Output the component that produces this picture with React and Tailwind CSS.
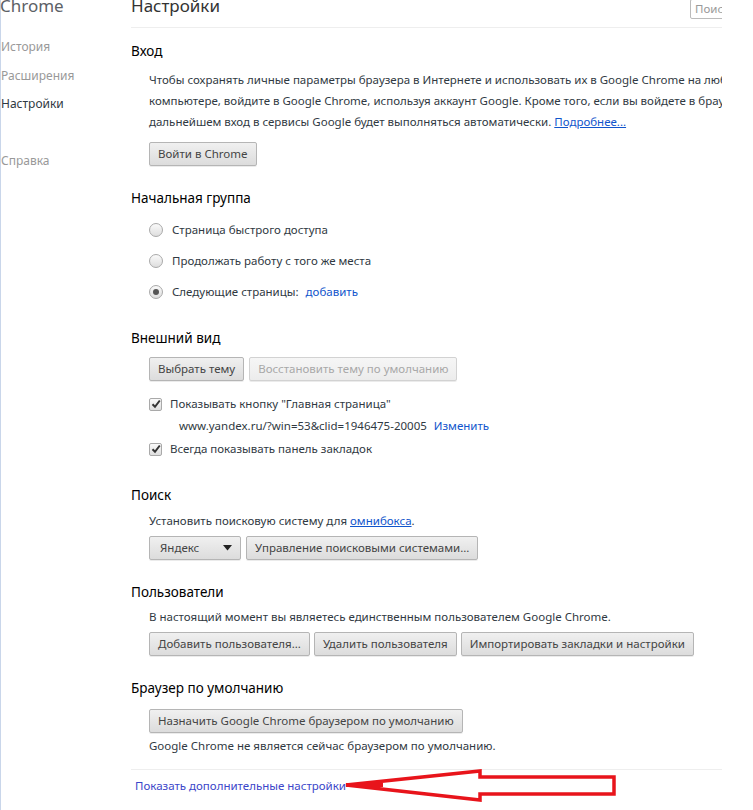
import React from "react";

const FONT = { fontFamily: '"Noto Sans", "Open Sans", sans-serif' };

function Btn({ children, disabled, className = "" }) {
  return (
    <button
      type="button"
      className={`h-[24px] px-[8px] rounded-[2px] border border-[#b5b5b5] bg-gradient-to-b from-[#f0f0f0] to-[#dcdcdc] shadow-[0_1px_0_rgba(0,0,0,0.08)] text-[11.5px] leading-[22px] whitespace-nowrap ${disabled ? "text-[#a8a8a8] border-[#d2d2d2] from-[#f6f6f6] to-[#ececec]" : "text-[#444]"} ${className}`}
    >
      {children}
    </button>
  );
}

function Radio({ checked, children }) {
  return (
    <div className="flex items-center h-[20px]">
      <span className="w-[14px] h-[14px] rounded-full border border-[#a9a9a9] bg-gradient-to-b from-[#fafafa] to-[#dedede] flex items-center justify-center shrink-0">
        {checked && <span className="w-[6px] h-[6px] rounded-full bg-[#555]" />}
      </span>
      <span className="ml-[9px] text-[11.5px] text-[#303942]">{children}</span>
    </div>
  );
}

function Check({ children }) {
  return (
    <div className="flex items-center h-[20px]">
      <span className="w-[13px] h-[13px] rounded-[2px] border border-[#a9a9a9] bg-gradient-to-b from-[#fafafa] to-[#dedede] flex items-center justify-center shrink-0">
        <svg width="10" height="10" viewBox="0 0 10 10">
          <path d="M1.5 5.2 L4 7.8 L8.8 1.5" fill="none" stroke="#333" strokeWidth="2" />
        </svg>
      </span>
      <span className="ml-[8px] text-[11.5px] text-[#303942]">{children}</span>
    </div>
  );
}

function H3({ children, className = "" }) {
  return <h3 className={`text-[13.5px] leading-[20px] text-black ${className}`}>{children}</h3>;
}

export default function App() {
  return (
    <div className="w-[753px] h-[810px] bg-white overflow-hidden flex" style={FONT}>
      {/* sidebar */}
      <div className="w-[131px] shrink-0 border-l border-[#c9d6ea]">
        <div className="text-[17px] leading-[24px] text-[#5c6166] mt-[-6px] ml-[-1px]">Chrome</div>
        <div className="mt-[19px] text-[12px] leading-[20px] text-[#999]">История</div>
        <div className="mt-[9px] text-[12px] leading-[20px] text-[#999]">Расширения</div>
        <div className="mt-[8px] text-[12px] leading-[20px] text-[#303942]">Настройки</div>
        <div className="mt-[37px] text-[12px] leading-[20px] text-[#999]">Справка</div>
      </div>

      {/* main */}
      <div className="w-[591px] shrink-0 overflow-hidden relative">
        <div className="h-[28px] border-b border-[#eee] flex justify-between">
          <h1 className="text-[17px] leading-[24px] text-[#333] mt-[-6px]">Настройки</h1>
          <div className="w-[100px] h-[20px] mr-[-68px] border border-[#bbb] rounded-[2px] text-[11.5px] leading-[18px] text-[#999] pl-[4px] mt-[-1px]">
            Поиск
          </div>
        </div>

        {/* Вход */}
        <H3 className="mt-[13px]">Вход</H3>
        <p className="pl-[18px] mt-[8px] text-[11.5px] leading-[21px] text-[#303942] whitespace-nowrap">
          Чтобы сохранять личные параметры браузера в Интернете и использовать их в Google Chrome на любом
          <br />
          компьютере, войдите в Google Chrome, используя аккаунт Google. Кроме того, если вы войдете в браузер,
          <br />
          дальнейшем вход в сервисы Google будет выполняться автоматически.{" "}
          <a className="text-[#15c] underline">Подробнее...</a>
        </p>
        <div className="pl-[18px] mt-[8px]">
          <Btn>Войти в Chrome</Btn>
        </div>

        {/* Начальная группа */}
        <H3 className="mt-[22px]">Начальная группа</H3>
        <div className="pl-[18px] mt-[12px] flex flex-col gap-[11px]">
          <Radio>Страница быстрого доступа</Radio>
          <Radio>Продолжать работу с того же места</Radio>
          <Radio checked>
            Следующие страницы: <a className="ml-[4px] text-[#15c]">добавить</a>
          </Radio>
        </div>

        {/* Внешний вид */}
        <H3 className="mt-[26px]">Внешний вид</H3>
        <div className="pl-[18px] mt-[9px] flex gap-[5px]">
          <Btn>Выбрать тему</Btn>
          <Btn disabled>Восстановить тему по умолчанию</Btn>
        </div>
        <div className="pl-[18px] mt-[13px]">
          <Check>Показывать кнопку "Главная страница"</Check>
          <div className="pl-[30px] mt-[2px] h-[20px] text-[11.5px] leading-[20px] text-[#303942]">
            www.yandex.ru/?win=53&clid=1946475-20005 <a className="ml-[4px] text-[#15c]">Изменить</a>
          </div>
          <div className="mt-[3px]">
            <Check>Всегда показывать панель закладок</Check>
          </div>
        </div>

        {/* Поиск */}
        <H3 className="mt-[26px]">Поиск</H3>
        <div className="pl-[18px] mt-[6px] text-[11.5px] leading-[20px] text-[#303942]">
          Установить поисковую систему для <a className="text-[#15c] underline">омнибокса</a>.
        </div>
        <div className="pl-[18px] mt-[5px] flex gap-[5px]">
          <Btn className="w-[92px] flex items-center justify-between !pl-[10px] !pr-[8px]">
            <span>Яндекс</span>
            <svg width="9" height="6" viewBox="0 0 9 6">
              <path d="M0 0 H9 L4.5 5.5 Z" fill="#222" />
            </svg>
          </Btn>
          <Btn>Управление поисковыми системами...</Btn>
        </div>

        {/* Пользователи */}
        <H3 className="mt-[22px]">Пользователи</H3>
        <div className="pl-[18px] mt-[5px] text-[11.5px] leading-[20px] text-[#303942]">
          В настоящий момент вы являетесь единственным пользователем Google Chrome.
        </div>
        <div className="pl-[18px] mt-[5px] flex gap-[4px]">
          <Btn>Добавить пользователя...</Btn>
          <Btn>Удалить пользователя</Btn>
          <Btn>Импортировать закладки и настройки</Btn>
        </div>

        {/* Браузер по умолчанию */}
        <H3 className="mt-[22px]">Браузер по умолчанию</H3>
        <div className="pl-[18px] mt-[9px]">
          <Btn>Назначить Google Chrome браузером по умолчанию</Btn>
        </div>
        <div className="pl-[18px] mt-[3px] text-[11.5px] leading-[20px] text-[#303942]">
          Google Chrome не является сейчас браузером по умолчанию.
        </div>

        <div className="mt-[13px] border-t border-[#eee]" />
        <div className="mt-[6px] pl-[4px] text-[11.5px] leading-[20px]">
          <a className="text-[#3b46c9]">Показать дополнительные настройки</a>
        </div>

        {/* red arrow annotation */}
        <svg className="absolute left-[212px] top-[766px]" width="290" height="38" viewBox="0 0 290 38">
          <path
            d="M3 19 L137 5 L137 11 L271 11 L271 28 L137 28 L137 34 Z"
            fill="none"
            stroke="#e8141b"
            strokeWidth="3.5"
            strokeLinejoin="miter"
          />
          <path d="M3 19 L40 19" stroke="#e8141b" strokeWidth="4" />
        </svg>
      </div>
    </div>
  );
}
